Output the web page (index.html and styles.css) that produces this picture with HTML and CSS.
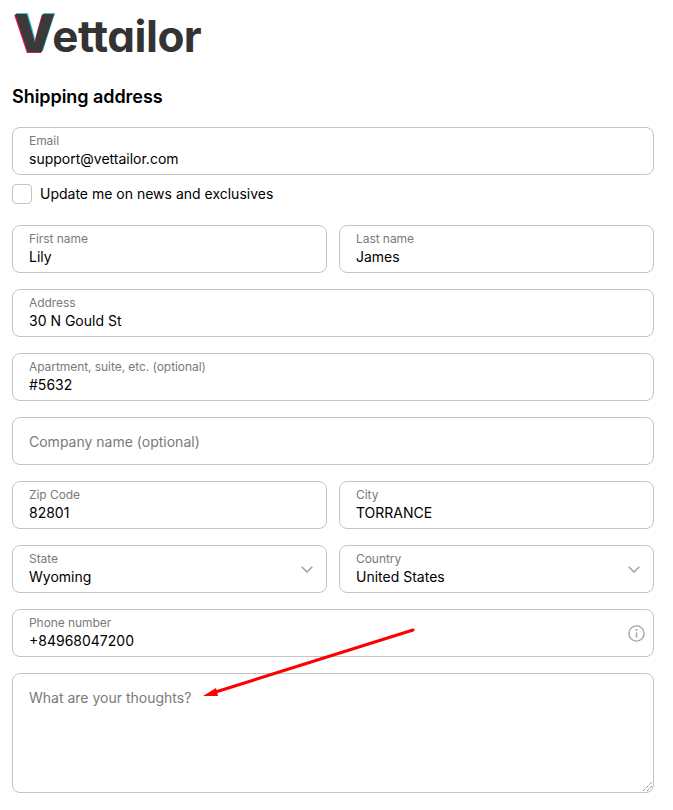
FILE: index.html
```html
<!DOCTYPE html>
<html lang="en">
<head>
<meta charset="utf-8">
<title>Shipping address</title>
<link rel="stylesheet" href="styles.css">
</head>
<body>
<div class="page">
  <div class="logo"><span class="logo-v">V</span>ettailor</div>
  <h2 class="title">Shipping address</h2>
  <form class="form">
    <div class="group">
      <div class="field"><span class="label">Email</span><span class="value">support@vettailor.com</span></div>
      <label class="check"><span class="box"></span><span>Update me on news and exclusives</span></label>
    </div>
    <div class="row">
      <div class="field"><span class="label">First name</span><span class="value">Lily</span></div>
      <div class="field"><span class="label">Last name</span><span class="value">James</span></div>
    </div>
    <div class="field"><span class="label">Address</span><span class="value">30 N Gould St</span></div>
    <div class="field"><span class="label">Apartment, suite, etc. (optional)</span><span class="value">#5632</span></div>
    <div class="field empty"><span class="placeholder">Company name (optional)</span></div>
    <div class="row">
      <div class="field"><span class="label">Zip Code</span><span class="value">82801</span></div>
      <div class="field"><span class="label">City</span><span class="value">TORRANCE</span></div>
    </div>
    <div class="row">
      <div class="field with-icon"><span class="label">State</span><span class="value">Wyoming</span>
        <svg class="icon chevron" width="12" height="7" viewBox="0 0 12 7"><path d="M.7.7L6 6l5.3-5.3" fill="none" stroke="#a3a3a3" stroke-width="1.6"/></svg>
      </div>
      <div class="field with-icon"><span class="label">Country</span><span class="value">United States</span>
        <svg class="icon chevron" width="12" height="7" viewBox="0 0 12 7"><path d="M.7.7L6 6l5.3-5.3" fill="none" stroke="#a3a3a3" stroke-width="1.6"/></svg>
      </div>
    </div>
    <div class="field with-icon"><span class="label">Phone number</span><span class="value">+84968047200</span>
      <svg class="icon info" width="17" height="17" viewBox="0 0 17 17"><circle cx="8.5" cy="8.500" r="7.6" fill="none" stroke="#a3a3a3" stroke-width="1.4"/><path d="M8.5 7.5v5" stroke="#a3a3a3" stroke-width="1.5"/><circle cx="8.5" cy="5" r="1" fill="#a3a3a3"/></svg>
    </div>
    <div class="area"><span class="placeholder">What are your thoughts?</span>
      <svg class="grip" width="9" height="9" viewBox="0 0 9 9"><path d="M0 9L9 0M4 9l5-5" stroke="#555" stroke-width="1" stroke-dasharray="1 1"/></svg>
    </div>
  </form>
  <svg class="arrow" width="673" height="810" viewBox="0 0 673 810">
    <path d="M413 630L214 692.500" stroke="#f00" stroke-width="3" stroke-linecap="round"/>
    <path d="M203 696L216 688L218 696Z" fill="#f00"/>
  </svg>
</div>
</body>
</html>
```
FILE: styles.css
```css
* { box-sizing: border-box; }
html, body { margin: 0; padding: 0; background: #fff; }
body { font-family: Inter, "Liberation Sans", sans-serif; color: #000; }
.page { position: relative; width: 673px; height: 810px; padding: 0 19px 0 12px; overflow: hidden; }
.logo {
  height: 64px; padding: 11px 0 0 2px;
  font-family: Inter, sans-serif; font-weight: 700; font-size: 44px; line-height: 50px;
  font-feature-settings: "cv11" 1;
  color: #333; letter-spacing: -0.5px;
}
.logo-v { font-size: 52px; line-height: 0; font-weight: 900; letter-spacing: -3px; color: #3a3a3a; text-shadow: -1px 1px 0 #d81b45, 1px -1px 0 #35c8da; }
.title { margin: 22px 0 0; font-size: 18px; line-height: 22px; font-weight: 600; letter-spacing: -0.05px; }
.form { display: flex; flex-direction: column; gap: 16px; margin-top: 19px; }
.group { display: flex; flex-direction: column; gap: 9px; padding-bottom: 5px; }
.row { display: flex; gap: 12px; }
.row .field { flex: 1 1 0; }
.field {
  position: relative; height: 48px; border: 1px solid #c4c4c4; border-radius: 8px;
  padding: 5px 16px; display: flex; flex-direction: column; background: #fff;
}
.field.empty { justify-content: center; padding-top: 1px; padding-bottom: 0; }
.label { font-size: 12px; line-height: 15px; color: #7a7a7a; letter-spacing: -0.06px; }
.value { font-size: 14px; line-height: 20px; margin-top: 1px; color: #000; }
.placeholder { font-size: 14px; line-height: 20px; color: #7a7a7a; }
.check { display: flex; align-items: center; gap: 8px; font-size: 14px; line-height: 20px; color: #000; }
.box { width: 20px; height: 20px; border: 1px solid #c4c4c4; border-radius: 4px; }
.icon { position: absolute; }
.chevron { right: 13px; top: 20px; }
.info { right: 8px; top: 15px; }
.area {
  position: relative; height: 120px; border: 1px solid #c4c4c4; border-radius: 8px;
  padding: 13px 16px;
}
.grip { position: absolute; right: 1px; bottom: 1px; }
.arrow { position: absolute; left: 0; top: 0; pointer-events: none; }
```
